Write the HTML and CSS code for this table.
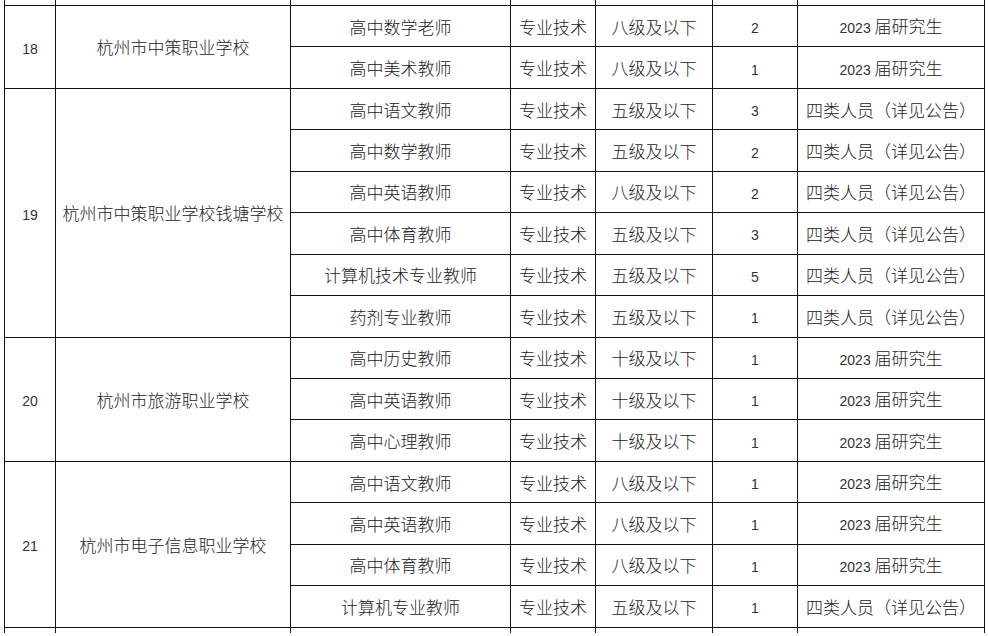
FILE: index.html
```html
<!DOCTYPE html>
<html lang="zh-CN">
<head>
<meta charset="utf-8">
<title>招聘计划表</title>
<link rel="stylesheet" href="styles.css">
</head>
<body>
<table class="plan">
  <colgroup>
    <col class="c-no"><col class="c-school"><col class="c-post"><col class="c-type"><col class="c-level"><col class="c-count"><col class="c-req">
  </colgroup>
  <tbody>
    <tr class="edge-top"><td></td><td></td><td></td><td></td><td></td><td></td><td></td></tr>

    <tr><td rowspan="2"><span class="num">18</span></td><td rowspan="2">杭州市中策职业学校</td><td>高中数学老师</td><td>专业技术</td><td>八级及以下</td><td><span class="num">2</span></td><td><span class="num">2023</span> 届研究生</td></tr>
    <tr><td>高中美术教师</td><td>专业技术</td><td>八级及以下</td><td><span class="num">1</span></td><td><span class="num">2023</span> 届研究生</td></tr>

    <tr><td rowspan="6"><span class="num">19</span></td><td rowspan="6">杭州市中策职业学校钱塘学校</td><td>高中语文教师</td><td>专业技术</td><td>五级及以下</td><td><span class="num">3</span></td><td>四类人员（详见公告）</td></tr>
    <tr><td>高中数学教师</td><td>专业技术</td><td>五级及以下</td><td><span class="num">2</span></td><td>四类人员（详见公告）</td></tr>
    <tr><td>高中英语教师</td><td>专业技术</td><td>八级及以下</td><td><span class="num">2</span></td><td>四类人员（详见公告）</td></tr>
    <tr><td>高中体育教师</td><td>专业技术</td><td>五级及以下</td><td><span class="num">3</span></td><td>四类人员（详见公告）</td></tr>
    <tr><td>计算机技术专业教师</td><td>专业技术</td><td>五级及以下</td><td><span class="num">5</span></td><td>四类人员（详见公告）</td></tr>
    <tr><td>药剂专业教师</td><td>专业技术</td><td>五级及以下</td><td><span class="num">1</span></td><td>四类人员（详见公告）</td></tr>

    <tr><td rowspan="3"><span class="num">20</span></td><td rowspan="3">杭州市旅游职业学校</td><td>高中历史教师</td><td>专业技术</td><td>十级及以下</td><td><span class="num">1</span></td><td><span class="num">2023</span> 届研究生</td></tr>
    <tr><td>高中英语教师</td><td>专业技术</td><td>十级及以下</td><td><span class="num">1</span></td><td><span class="num">2023</span> 届研究生</td></tr>
    <tr><td>高中心理教师</td><td>专业技术</td><td>十级及以下</td><td><span class="num">1</span></td><td><span class="num">2023</span> 届研究生</td></tr>

    <tr><td rowspan="4"><span class="num">21</span></td><td rowspan="4">杭州市电子信息职业学校</td><td>高中语文教师</td><td>专业技术</td><td>八级及以下</td><td><span class="num">1</span></td><td><span class="num">2023</span> 届研究生</td></tr>
    <tr><td>高中英语教师</td><td>专业技术</td><td>八级及以下</td><td><span class="num">1</span></td><td><span class="num">2023</span> 届研究生</td></tr>
    <tr><td>高中体育教师</td><td>专业技术</td><td>八级及以下</td><td><span class="num">1</span></td><td><span class="num">2023</span> 届研究生</td></tr>
    <tr><td>计算机专业教师</td><td>专业技术</td><td>五级及以下</td><td><span class="num">1</span></td><td>四类人员（详见公告）</td></tr>

    <tr class="edge-bottom"><td></td><td></td><td></td><td></td><td></td><td></td><td></td></tr>
  </tbody>
</table>
</body>
</html>
```

FILE: styles.css
```css
html, body {
  margin: 0;
  padding: 0;
  background: #ffffff;
  overflow: hidden;
}

.plan {
  margin-left: 4px;
  width: 980px;
  border-collapse: collapse;
  table-layout: fixed;
  font-family: "Noto Sans CJK SC", "Liberation Sans", sans-serif;
  font-weight: 300;
  font-size: 17px;
  color: #222222;
}

.c-no { width: 51px; }
.c-school { width: 235px; }
.c-post { width: 220px; }
.c-type { width: 85px; }
.c-level { width: 117px; }
.c-count { width: 85px; }
.c-req { width: 187px; }

.plan td {
  border: 1px solid #111111;
  text-align: center;
  vertical-align: middle;
  padding: 0;
  height: 40.45px;
  white-space: nowrap;
  line-height: 1;
}

.plan .edge-top td {
  height: 5px;
  border-top: none;
}

.plan .edge-bottom td {
  height: 5px;
  border-bottom: none;
}

.num {
  font-family: "Liberation Sans", Arial, sans-serif;
  font-weight: 400;
  font-size: 14px;
  color: #333333;
}
```
